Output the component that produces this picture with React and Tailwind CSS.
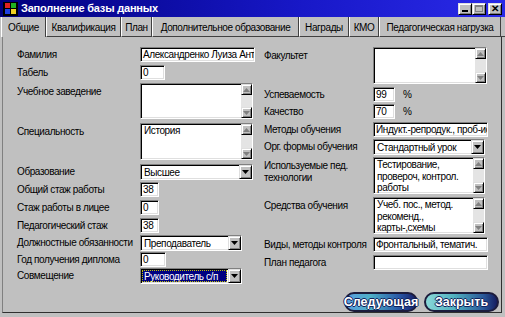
import React from 'react';

const sunken =
  'border border-t-[#808080] border-l-[#808080] border-r-white border-b-white shadow-[inset_1px_1px_0_#000,inset_-1px_-1px_0_#dfdfdf]';
const raised =
  'bg-[#c0c0c0] border border-t-[#dfdfdf] border-l-[#dfdfdf] border-r-black border-b-black shadow-[inset_1px_1px_0_#fff,inset_-1px_-1px_0_#808080]';

const Field = ({ className, children }) => (
  <div className={`h-[15px] bg-white ${sunken} ${className} flex items-center px-[2px] text-[10px] overflow-hidden whitespace-nowrap`}>
    {children}
  </div>
);

const Arrow = ({ up, color = '#808080' }) => (
  <svg width="7" height="4" viewBox="0 0 7 4">
    {up ? <path d="M3.5 0 L7 4 L0 4 Z" fill={color} /> : <path d="M0 0 L7 0 L3.5 4 Z" fill={color} />}
  </svg>
);

const ScrollBtn = ({ up }) => (
  <div className={`h-[11px] w-[11px] ${raised} flex items-center justify-center`}>
    <Arrow up={up} />
  </div>
);

const TextBox = ({ className, lines = [] }) => (
  <div className={`${sunken} bg-white flex ${className}`}>
    <div className="flex-1 px-[3px] pt-[1px] text-[10px] leading-[11.5px] overflow-hidden">
      {lines.map((l) => (
        <div key={l} className="whitespace-nowrap">{l}</div>
      ))}
    </div>
    <div className="w-[11px] flex flex-col bg-[#e4e4e4]">
      <ScrollBtn up />
      <div className="flex-1" />
      <ScrollBtn />
    </div>
  </div>
);

const Select = ({ className, value, active }) => (
  <div className={`h-[16px] ${sunken} bg-white flex ${className}`}>
    <div className="flex-1 flex items-center p-[1px] overflow-hidden">
      <div
        className={`h-full w-full flex items-center px-[2px] text-[10px] whitespace-nowrap ${
          active ? 'bg-[#000080] text-white outline-1 outline-dotted outline-[#c0c000] -outline-offset-1' : ''
        }`}
      >
        {value}
      </div>
    </div>
    <div className={`w-[13px] ${raised} flex items-center justify-center`}>
      <Arrow color="#000" />
    </div>
  </div>
);

const Row = ({ label, labelW, mt, children, top }) => (
  <div className={`flex ${top ? 'items-start' : 'items-center'} ${mt}`}>
    <div className={`${labelW} shrink-0 text-[10px] leading-[12px] whitespace-nowrap ${top ? 'pt-[3px]' : ''}`}>{label}</div>
    {children}
  </div>
);

const AppIcon = () => (
  <svg width="15" height="14" viewBox="0 0 15 14">
    <rect x="0" y="0" width="15" height="14" fill="#000" />
    <rect x="2" y="1" width="5" height="5" fill="#e02020" />
    <rect x="8" y="1" width="5" height="5" fill="#20b020" />
    <rect x="2" y="7" width="5" height="5" fill="#2040e0" />
    <rect x="8" y="7" width="5" height="5" fill="#f0d020" />
  </svg>
);

const WinBtn = ({ children, className = '' }) => (
  <div className={`h-[12px] w-[14px] ${raised} flex items-center justify-center ${className}`}>{children}</div>
);

const tabs = [
  ['Общие', 'w-[45px]'],
  ['Квалификация', 'w-[75px]'],
  ['План', 'w-[31px]'],
  ['Дополнительное образование', 'w-[147px]'],
  ['Награды', 'w-[50px]'],
  ['КМО', 'w-[30px]'],
  ['Педагогическая нагрузка', 'w-[122px]'],
];

const PillBtn = ({ children, className }) => (
  <div
    className={`h-[20px] rounded-full border-2 border-[#1c1c3c] flex items-center justify-center text-white font-bold text-[12.5px] tracking-normal [text-shadow:1px_0_0_#10205a,-1px_0_0_#10205a,0_1px_0_#10205a,0_-1px_0_#10205a] ${className}`}
  >
    {children}
  </div>
);

export default function App() {
  return (
    <div className="w-[505px] h-[317px] bg-[#c0c0c0] overflow-hidden flex flex-col font-['Liberation_Sans',Arial,sans-serif] tracking-[-0.4px] text-black">
      {/* title bar */}
      <div className="h-[17px] flex items-center bg-[linear-gradient(to_right,#00007c,#1818c8_60%,#2a2ae8)] pl-[3px] pr-[3px]">
        <AppIcon />
        <div className="ml-[3px] text-white font-bold text-[11px] tracking-[-0.2px]">Заполнение базы данных</div>
        <div className="ml-auto flex items-center">
          <WinBtn>
            <div className="w-[6px] h-[2px] bg-black mt-[5px]" />
          </WinBtn>
          <WinBtn>
            <div className="w-[8px] h-[7px] border border-[#808080] border-t-2" />
          </WinBtn>
          <WinBtn className="ml-[2px]">
            <span className="text-[10px] font-bold leading-none">✕</span>
          </WinBtn>
        </div>
      </div>

      {/* tabs */}
      <div className="h-[20px] flex pl-[1px]">
        {tabs.map(([t, w], i) => (
          <div
            key={t}
            className={`${w} h-full flex items-center justify-center pt-[1px] text-[10px] whitespace-nowrap border-l border-l-white border-r border-r-[#404040] ${
              i === 0 ? '' : 'border-b border-b-[#404040]'
            }`}
          >
            {t}
          </div>
        ))}
        <div className="flex-1 border-b border-b-[#404040]" />
      </div>

      {/* panel */}
      <div className="flex-1 flex ml-[2px] mr-[3px] mb-[4px] border-l border-l-[#808080] border-r border-r-[#303030] border-b border-b-[#303030] pt-[10px]">
        {/* left column */}
        <div className="ml-[14px] w-[239px] flex flex-col">
          <Row label="Фамилия" labelW="w-[123px]" mt="">
            <Field className="w-[115px]">Александренко Луиза Антон</Field>
          </Row>
          <Row label="Табель" labelW="w-[123px]" mt="mt-[3px]">
            <Field className="w-[25px]">0</Field>
          </Row>
          <Row label="Учебное заведение" labelW="w-[123px]" mt="mt-[3px]" top>
            <TextBox className="w-[113px] h-[36px]" />
          </Row>
          <Row label="Специальность" labelW="w-[123px]" mt="mt-[4px]" top>
            <TextBox className="w-[113px] h-[37px]" lines={['История']} />
          </Row>
          <Row label="Образование" labelW="w-[123px]" mt="mt-[4px]">
            <Select className="w-[113px]" value="Высшее" />
          </Row>
          <Row label="Общий стаж работы" labelW="w-[123px]" mt="mt-[2px]">
            <Field className="w-[19px]">38</Field>
          </Row>
          <Row label="Стаж работы в лицее" labelW="w-[123px]" mt="mt-[3px]">
            <Field className="w-[19px]">0</Field>
          </Row>
          <Row label="Педагогический стаж" labelW="w-[123px]" mt="mt-[3px]">
            <Field className="w-[19px]">38</Field>
          </Row>
          <Row label="Должностные обязанности" labelW="w-[123px]" mt="mt-[2px]">
            <Select className="w-[102px]" value="Преподаватель" />
          </Row>
          <Row label="Год получения диплома" labelW="w-[123px]" mt="mt-[1px]">
            <Field className="w-[26px]">0</Field>
          </Row>
          <Row label="Совмещение" labelW="w-[123px]" mt="mt-[1px]">
            <Select className="w-[102px]" value="Руководитель с/п" active />
          </Row>
        </div>

        {/* right column */}
        <div className="ml-[8px] w-[236px] flex flex-col">
          <Row label="Факультет" labelW="w-[109px]" mt="" top>
            <TextBox className="w-[114px] h-[37px]" />
          </Row>
          <Row label="Успеваемость" labelW="w-[109px]" mt="mt-[3px]">
            <Field className="w-[22px]">99</Field>
            <span className="ml-[8px] text-[10px]">%</span>
          </Row>
          <Row label="Качество" labelW="w-[109px]" mt="mt-[2px]">
            <Field className="w-[22px]">70</Field>
            <span className="ml-[8px] text-[10px]">%</span>
          </Row>
          <Row label="Методы обучения" labelW="w-[109px]" mt="mt-[3px]">
            <Field className="w-[115px]">Индукт.-репродук., проб-ис</Field>
          </Row>
          <Row label="Орг. формы обучения" labelW="w-[109px]" mt="mt-[2px]">
            <Select className="w-[112px]" value="Стандартный урок" />
          </Row>
          <Row label={<>Используемые пед.<br />технологии</>} labelW="w-[109px]" mt="mt-[2px]" top>
            <TextBox className="w-[112px] h-[37px]" lines={['Тестирование,', 'провероч, контрол.', 'работы']} />
          </Row>
          <Row label="Средства обучения" labelW="w-[109px]" mt="mt-[3px]" top>
            <TextBox className="w-[112px] h-[37px]" lines={['Учеб. пос., метод.', 'рекоменд.,', 'карты-,схемы']} />
          </Row>
          <Row label="Виды, методы контроля" labelW="w-[109px]" mt="mt-[3px]">
            <Field className="w-[115px]">Фронтальный, тематич.</Field>
          </Row>
          <Row label="План педагога" labelW="w-[109px]" mt="mt-[3px]">
            <Field className="w-[115px]" />
          </Row>
          <div className="mt-[22px] flex justify-end gap-[6px] pr-[1px]">
            <PillBtn className="w-[74px] bg-[linear-gradient(to_right,#5a9ee0,#4fb0c8_35%,#2a5aa8_75%,#16206a)]">
              Следующая
            </PillBtn>
            <PillBtn className="w-[75px] bg-[linear-gradient(to_right,#8ad8d8,#50b0c0_40%,#2a5a9a_80%,#141c60)]">
              Закрыть
            </PillBtn>
          </div>
        </div>
      </div>
    </div>
  );
}
